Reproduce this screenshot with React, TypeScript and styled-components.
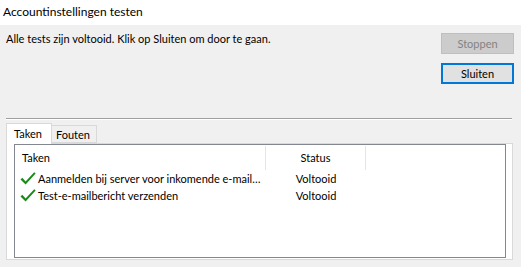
import React from 'react';
import styled, {createGlobalStyle} from 'styled-components';

const GlobalStyle = createGlobalStyle`
    body {
        margin: 0;
        background: #f0f0f0;
        font-family: Lato, "Noto Sans", sans-serif;
        font-size: 11px;
        color: #000;
    }
`;

const Window = styled.div`
    width: 521px;
    height: 267px;
    display: flex;
    flex-direction: column;
    background: #f0f0f0;
    overflow: hidden;
`;

const TitleBar = styled.div`
    height: 25px;
    line-height: 24px;
    padding-left: 3px;
    background: #fff;
    font-size: 12px;
`;

const TopRow = styled.div`
    display: flex;
    justify-content: space-between;
    padding: 8px 7px 0 6px;
`;

const Message = styled.div`
    margin-top: -2px;
    line-height: 16px;
`;

const ButtonColumn = styled.div`
    display: flex;
    flex-direction: column;
    gap: 9px;
`;

const Button = styled.button<{$disabled?: boolean; $focused?: boolean}>`
    width: 73px;
    height: 21px;
    box-sizing: border-box;
    padding: 0;
    font: inherit;
    background: ${p => (p.$disabled ? '#cccccc' : '#e1e1e1')};
    color: ${p => (p.$disabled ? '#838383' : '#000')};
    border: ${p => (p.$focused ? '2px solid #0078d7' : p.$disabled ? '1px solid #bfbfbf' : '1px solid #adadad')};
`;

const Separator = styled.div`
    margin: 34px 9px 0 6px;
    height: 1px;
    background: #a0a0a0;
    border-bottom: 1px solid #fff;
`;

const TabStrip = styled.div`
    display: flex;
    align-items: flex-end;
    margin: 3px 0 0 6px;
    height: 20px;
    position: relative;
    z-index: 1;
`;

const Tab = styled.div<{$active?: boolean}>`
    box-sizing: border-box;
    height: ${p => (p.$active ? '21px' : '18px')};
    margin-bottom: ${p => (p.$active ? '-1px' : '0')};
    padding: ${p => (p.$active ? '1px 9px 0 7px' : '0 6px 0 4px')};
    line-height: 17px;
    background: ${p => (p.$active ? '#fff' : '#f0f0f0')};
    border: 1px solid #d9d9d9;
    border-bottom: ${p => (p.$active ? 'none' : '1px solid #d9d9d9')};
    border-left: ${p => (p.$active ? '1px solid #d9d9d9' : 'none')};
`;

const Panel = styled.div`
    margin: 0 8px 0 6px;
    height: 117px;
    box-sizing: border-box;
    border: 1px solid #d9d9d9;
    background: #fff;
    padding: 0 6px 1px 7px;
    display: flex;
`;

const ListView = styled.div`
    flex: 1;
    border: 1px solid #828790;
    background: #fff;
`;

const columns = '251px 100px 1fr';

const HeaderRow = styled.div`
    display: grid;
    grid-template-columns: ${columns};
    height: 25px;
`;

const HeaderCell = styled.div<{$center?: boolean; $divider?: boolean}>`
    box-sizing: border-box;
    padding-left: ${p => (p.$center ? '0' : '7px')};
    text-align: ${p => (p.$center ? 'center' : 'left')};
    line-height: 24px;
    margin-top: 1px;
    border-right: ${p => (p.$divider ? '1px solid #e5e5e5' : 'none')};
`;

const Row = styled.div`
    display: grid;
    grid-template-columns: ${columns};
    height: 17px;
    line-height: 17px;
`;

const TaskCell = styled.div`
    display: flex;
    align-items: center;
    gap: 2px;
    padding-left: 5px;
    white-space: nowrap;
`;

const StatusCell = styled.div`
    text-align: center;
`;

const Check = () => (
    <svg width="16" height="16" viewBox="0 0 16 16" style={{flexShrink: 0}}>
        <polygon points="0.5,8.5 2.3,6.8 5.6,10.4 14.2,1.2 15.6,2.6 5.6,13.6" fill="#178a17"/>
    </svg>
);

const tasks = [
    {name: 'Aanmelden bij server voor inkomende e-mail…', status: 'Voltooid'},
    {name: 'Test-e-mailbericht verzenden', status: 'Voltooid'},
];

export default function App() {
    return (
        <Window>
            <GlobalStyle/>
            <TitleBar>Accountinstellingen testen</TitleBar>
            <TopRow>
                <Message>Alle tests zijn voltooid. Klik op Sluiten om door te gaan.</Message>
                <ButtonColumn>
                    <Button $disabled>Stoppen</Button>
                    <Button $focused>Sluiten</Button>
                </ButtonColumn>
            </TopRow>
            <Separator/>
            <TabStrip>
                <Tab $active>Taken</Tab>
                <Tab>Fouten</Tab>
            </TabStrip>
            <Panel>
                <ListView>
                    <HeaderRow>
                        <HeaderCell $divider>Taken</HeaderCell>
                        <HeaderCell $center $divider>Status</HeaderCell>
                        <HeaderCell/>
                    </HeaderRow>
                    {tasks.map(t => (
                        <Row key={t.name}>
                            <TaskCell>
                                <Check/>
                                <span>{t.name}</span>
                            </TaskCell>
                            <StatusCell>{t.status}</StatusCell>
                            <div/>
                        </Row>
                    ))}
                </ListView>
            </Panel>
        </Window>
    );
}
